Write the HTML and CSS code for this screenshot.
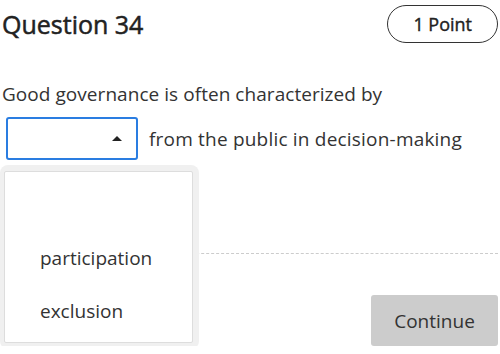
FILE: index.html
```html
<!DOCTYPE html>
<html lang="en">
<head>
  <meta charset="UTF-8">
  <title>Question 34</title>
  <link rel="stylesheet" href="styles.css">
</head>
<body>
  <div class="quiz">
    <div class="quiz-header">
      <h1>Question 34</h1>
      <span class="points">1 Point</span>
    </div>

    <p class="prompt">Good governance is often characterized by</p>

    <div class="blank-row">
      <div class="select-wrap">
        <div class="select open">
          <span class="caret"></span>
        </div>
        <!-- open dropdown -->
        <div class="menu">
          <ul>
            <li>participation</li>
            <li>exclusion</li>
          </ul>
        </div>
      </div>
      <span class="after">from the public in decision-making</span>
    </div>

    <div class="quiz-footer">
      <button type="button" class="continue" disabled>Continue</button>
    </div>
  </div>
</body>
</html>
```

FILE: styles.css
```css
body {
  font-family: 'Open Sans', 'Noto Sans', sans-serif;
  margin: 0;
  color: #333;
  background: white;
}

.quiz {
  padding: 0 2px;
}

.quiz-header {
  display: flex;
  justify-content: space-between;
  align-items: center;
  padding-top: 5px;
}

h1 {
  margin: 0;
  font-size: 25px;
  font-weight: 400;
  -webkit-text-stroke: 0.5px #222;
  color: #222;
}

.points {
  border: 1px solid #333;
  border-radius: 20px;
  padding: 5px 25px;
  font-size: 18px;
  -webkit-text-stroke: 0.4px #222;
  color: #222;
  line-height: 26px;
}

.prompt {
  margin: 38px 0 0;
  font-size: 19px;
  line-height: 26px;
  letter-spacing: 0.05px;
}

.blank-row {
  display: flex;
  align-items: center;
  gap: 11px;
  margin-top: 10px;
}

.select-wrap {
  position: relative;
  margin-left: 4px;
}

.select {
  width: 132px;
  height: 43px;
  border: 2px solid #2a7de1;
  border-radius: 3px;
  box-sizing: border-box;
  display: flex;
  align-items: center;
  justify-content: flex-end;
  padding-right: 14px;
}

.caret {
  width: 0;
  height: 0;
  border-left: 5px solid transparent;
  border-right: 5px solid transparent;
  border-bottom: 5px solid #222;
}

.after {
  font-size: 19px;
  line-height: 26px;
  letter-spacing: 0.2px;
}

.menu {
  position: absolute;
  top: 48px;
  left: -6px;
  width: 199px;
  height: 184px;
  box-sizing: border-box;
  background: #f0f0f0;
  border-radius: 8px;
  padding: 6px 6px 6px 4px;
  z-index: 2;
}

.menu ul {
  list-style: none;
  margin: 0;
  padding: 60px 0 0 35px;
  height: 100%;
  box-sizing: border-box;
  background: white;
  border: 1px solid #ddd;
  border-radius: 2px;
}

.menu li {
  font-size: 19px;
  line-height: 53px;
}

.quiz-footer {
  margin-top: 93px;
  border-top: 1px dashed #ccc;
  display: flex;
  justify-content: flex-end;
  padding-top: 41px;
}

.continue {
  background-color: #cccccc;
  color: #333;
  border: none;
  border-radius: 3px;
  font-family: inherit;
  font-size: 19px;
  width: 127px;
  height: 51px;
}
```
